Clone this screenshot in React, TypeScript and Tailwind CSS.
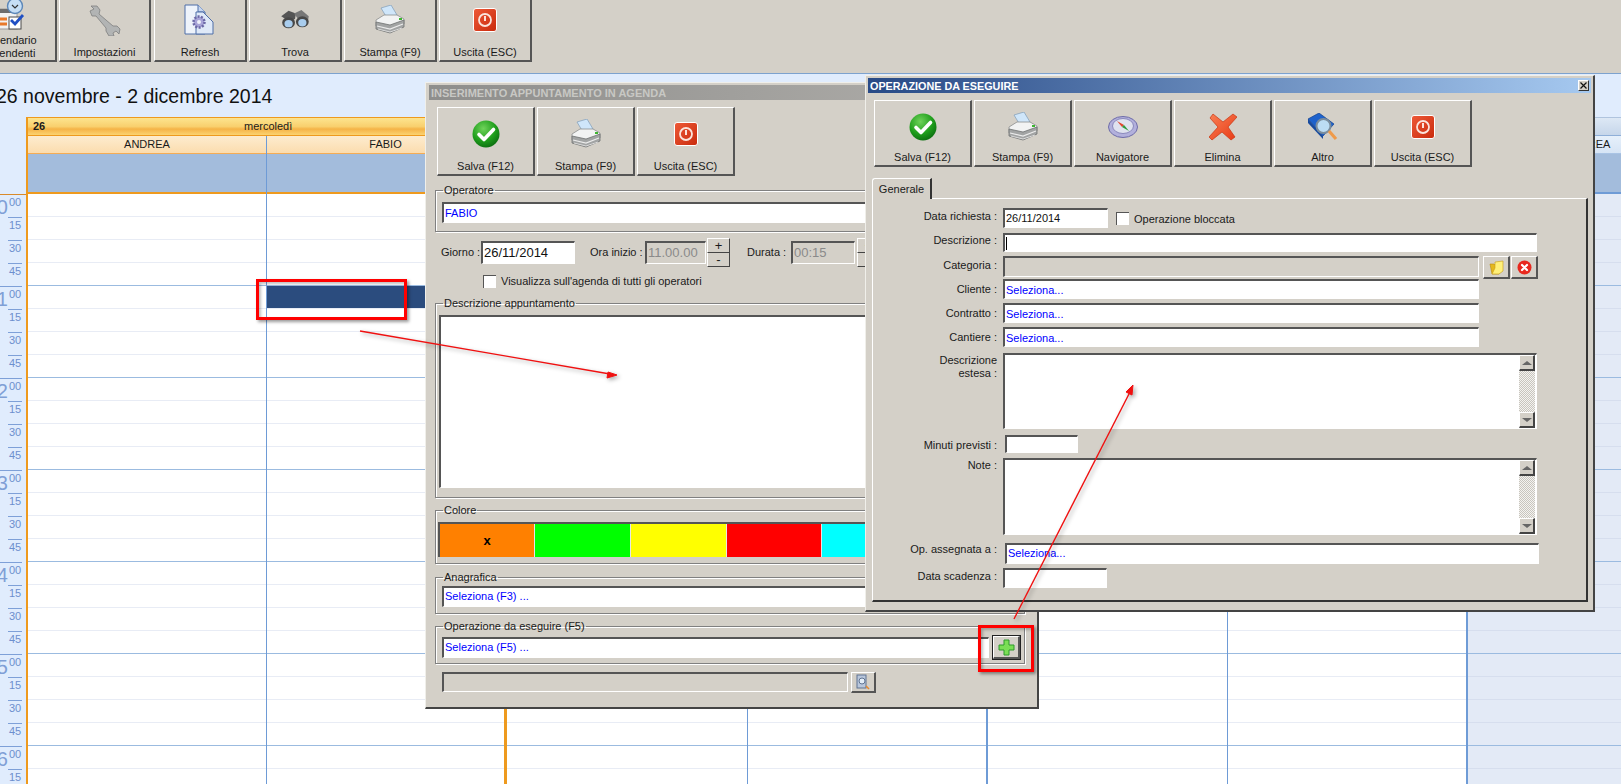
import type { ReactNode } from 'react';

const CheckIcon = () => (
  <svg width="28" height="28" viewBox="0 0 28 28">
    <defs>
      <radialGradient id="okGrad" cx="40%" cy="30%" r="75%">
        <stop offset="0" stopColor="#6fd35a" />
        <stop offset="0.6" stopColor="#1f9e1c" />
        <stop offset="1" stopColor="#0b6b10" />
      </radialGradient>
    </defs>
    <circle cx="14" cy="14" r="13.5" fill="url(#okGrad)" />
    <path d="M7 14.5l5 5 9.5-10" fill="none" stroke="#fff" strokeWidth="3.6" strokeLinecap="round" strokeLinejoin="round" />
  </svg>
);

const PrinterIcon = () => (
  <svg width="30" height="30" viewBox="0 0 30 30">
    <path d="M6 3l10-3 6 10-10 3z" fill="#cfe6fa" stroke="#7f9cb8" strokeWidth="0.7" />
    <path d="M1 15l8-5h13l7 4v5l-14 5-14-3z" fill="#f2f3f3" stroke="#8b8d8d" strokeWidth="0.8" />
    <path d="M1 17l14 3 14-5v7l-14 6-14-4z" fill="#a2a4a4" stroke="#6f7171" strokeWidth="0.8" />
    <path d="M2 21l13 3 13-5" fill="none" stroke="#ececec" strokeWidth="1.2" />
    <path d="M3 24l12 3 12-4" fill="none" stroke="#dadada" strokeWidth="1" />
    <rect x="24" y="13" width="3" height="2" fill="#3db52f" />
  </svg>
);

const PowerIcon = () => (
  <svg width="24" height="24" viewBox="0 0 24 24">
    <defs>
      <linearGradient id="pwGrad" x1="0" y1="0" x2="1" y2="1">
        <stop offset="0" stopColor="#ee5a38" />
        <stop offset="1" stopColor="#c92a0c" />
      </linearGradient>
    </defs>
    <rect x="0.5" y="0.5" width="23" height="23" rx="2.5" fill="url(#pwGrad)" stroke="#fff" />
    <circle cx="12" cy="12" r="6" fill="none" stroke="#fbe4dc" strokeWidth="1.8" />
    <rect x="11" y="8" width="2" height="5" fill="#fbe4dc" />
  </svg>
);

const WrenchIcon = () => (
  <svg width="32" height="32" viewBox="0 0 32 32">
    <path d="M1 7l4-2-3-3 6 0 3 4-1 4 14 12 4 0 3 3-1 5-3-3-3 2 1 3-5 0-3-5 0-3L7 12l-4 0z" fill="#b2b4b4" stroke="#7d7f7f" strokeWidth="0.8" />
  </svg>
);

const RefreshIcon = () => (
  <svg width="32" height="32" viewBox="0 0 32 32">
    <path d="M1 1h13l7 7v22H1z" fill="#eef3fb" stroke="#4f6ea8" />
    <path d="M14 1v7h7" fill="#c6d6f0" stroke="#4f6ea8" />
    <path d="M12 8h7l10 10v12H12z" fill="#dfe9f8" stroke="#4f6ea8" />
    <circle cx="15" cy="18" r="5.5" fill="#a8a4d8" stroke="#6b68a6" strokeWidth="2.5" strokeDasharray="2 1.4" />
    <circle cx="15" cy="18" r="2" fill="#eef0fa" />
  </svg>
);

const BinocularsIcon = () => (
  <svg width="32" height="22" viewBox="0 0 32 24">
    <path d="M1 8l8-6 8 3-1 6-6 3z" fill="#555" />
    <path d="M15 5l8-4 8 7-1 6-7 2z" fill="#777" />
    <ellipse cx="9" cy="15" rx="7" ry="6" fill="#484848" />
    <ellipse cx="24" cy="14" rx="7" ry="6" fill="#484848" />
    <ellipse cx="9" cy="16" rx="4.5" ry="4" fill="#a9cdee" />
    <ellipse cx="24" cy="15" rx="4.5" ry="4" fill="#a9cdee" />
  </svg>
);

const CalendarIcon = () => (
  <svg className="-translate-y-[5px]" width="30" height="32" viewBox="0 0 30 32">
    <rect x="0" y="10" width="22" height="20" fill="#f2f2f2" stroke="#9b9b9b" />
    <rect x="0" y="10" width="22" height="4" fill="#6c6c6c" />
    <path d="M3 20h9M3 25h9" stroke="#e8792a" strokeWidth="3" />
    <rect x="14" y="18" width="12" height="12" fill="#fff" stroke="#4a4a4a" />
    <path d="M16 21l4 4 8-9" fill="none" stroke="#1f4fc4" strokeWidth="2.8" />
    <circle cx="20" cy="7" r="7.5" fill="#c6def5" stroke="#5b86b8" strokeWidth="1.4" />
    <path d="M17 6l3 3 3-3" fill="none" stroke="#333" strokeWidth="1.2" />
  </svg>
);

const CompassIcon = () => (
  <svg width="30" height="26" viewBox="0 0 30 26">
    <ellipse cx="15" cy="13" rx="14.5" ry="10.5" fill="#b2b0dc" stroke="#6f6da8" />
    <ellipse cx="15" cy="12" rx="10.5" ry="7.5" fill="#dfe2ef" stroke="#8a88bc" />
    <path d="M9 7l7 4-2 2z" fill="#e0462c" />
    <path d="M21 17l-7-4 2-2z" fill="#2f9a3e" />
  </svg>
);

const DeleteIcon = () => (
  <svg width="28" height="28" viewBox="0 0 28 28">
    <defs>
      <linearGradient id="xGrad" x1="0" y1="0" x2="1" y2="1">
        <stop offset="0" stopColor="#f98055" />
        <stop offset="1" stopColor="#e83a15" />
      </linearGradient>
    </defs>
    <path d="M4 1l10 8 10-8 4 3-9 10 7 10-4 3-9-8-10 8-3-3 9-10-8-9z" fill="url(#xGrad)" stroke="#c93410" strokeWidth="0.7" strokeLinejoin="round" />
  </svg>
);

const BookIcon = () => (
  <svg width="31" height="29" viewBox="0 0 31 29">
    <path d="M1 6l11-6 15 11-11 12z" fill="#1e62cc" stroke="#12408c" strokeWidth="0.7" />
    <path d="M1 6l15 17v3L1 10z" fill="#174a9e" />
    <circle cx="16.5" cy="13" r="7" fill="#bcdcf3" stroke="#7b8d9c" strokeWidth="2" />
    <path d="M22 18l7 8" stroke="#ef9a4a" strokeWidth="3.2" />
  </svg>
);

const FolderIcon = () => (
  <svg width="15" height="15" viewBox="0 0 15 15">
    <path d="M1 4h4l1 1h4v9H3z" fill="#e4b81e" stroke="#b98c10" strokeWidth="0.6" />
    <path d="M6 2l8-1v10l-4 3H3l3-6z" fill="#fff07a" stroke="#c79a12" strokeWidth="0.6" />
  </svg>
);

const ClearIcon = () => (
  <svg width="15" height="15" viewBox="0 0 15 15">
    <circle cx="7.5" cy="7.5" r="7" fill="#e8281e" />
    <path d="M5 5l5 5M10 5l-5 5" stroke="#fff" strokeWidth="2.2" strokeLinecap="round" />
  </svg>
);

const PlusIcon = () => (
  <svg width="17" height="17" viewBox="0 0 17 17">
    <path d="M6 1h5v5h5v5h-5v5H6v-5H1V6h5z" fill="#7ade55" stroke="#2c9a2a" />
  </svg>
);

const DocSearchIcon = () => (
  <svg width="14" height="16" viewBox="0 0 14 16">
    <rect x="1" y="1" width="9" height="13" fill="#b9c7dc" stroke="#5f7391" />
    <circle cx="6" cy="7" r="3" fill="#e4eef8" stroke="#5f7391" />
    <path d="M10 12l3 3" stroke="#e88a2e" strokeWidth="1.6" />
  </svg>
);

const ToolButton = ({ icon, label, className }: { icon: ReactNode; label: ReactNode; className: string }) => (
  <div className={`flex flex-col items-center justify-between shrink-0 pt-[12px] pb-[1px] border-t border-l border-t-white border-l-white border-r-2 border-b-2 border-r-[#555] border-b-[#555] bg-[#d4d0c8] ${className}`}>
    <div className="h-[28px] flex items-center justify-center">{icon}</div>
    <div className="text-center leading-[13px] whitespace-nowrap">{label}</div>
  </div>
);

const Field = ({ className, children }: { className: string; children?: ReactNode }) => (
  <div className={`flex items-center pl-[1px] border-t-2 border-l-2 border-t-[#555] border-l-[#555] border-b border-r border-b-white border-r-white text-[#0000ff] whitespace-nowrap overflow-hidden shrink-0 ${className}`}>
    {children}
  </div>
);

const Group = ({ title, className, bodyClass, children }: { title: string; className: string; bodyClass: string; children: ReactNode }) => (
  <fieldset className={`border border-[#808080] shadow-[1px_1px_0_#fff,inset_1px_1px_0_#fff] w-[590px] ${className}`}>
    <legend className="ml-[7px] px-[1px] leading-[16px] whitespace-nowrap">{title}</legend>
    <div className={bodyClass}>{children}</div>
  </fieldset>
);

const SmallButton = ({ className, children }: { className: string; children: ReactNode }) => (
  <div className={`flex items-center justify-center shrink-0 border-t border-l border-t-white border-l-white border-r-2 border-b-2 border-r-[#555] border-b-[#555] ${className}`}>
    {children}
  </div>
);

const Spinner = () => (
  <div className="w-[23px] h-[29px] flex flex-col shrink-0 text-[13px] leading-[12px]">
    <div className="h-[15px] flex items-center justify-center border-t border-l border-t-white border-l-white border-r border-b border-r-[#444] border-b-[#444]">+</div>
    <div className="h-[14px] flex items-center justify-center border-l border-l-white border-r border-b border-r-[#444] border-b-[#444]">-</div>
  </div>
);

const Scrollbar = () => (
  <div className="w-[16px] flex flex-col shrink-0 bg-[repeating-conic-gradient(#c8c5be_0_25%,#f4f3f0_0_50%)] bg-[length:2px_2px]">
    <div className="h-[16px] flex items-center justify-center bg-[#d4d0c8] border-t border-l border-t-white border-l-white border-r-2 border-b-2 border-r-[#444] border-b-[#444]">
      <div className="w-0 h-0 border-x-[5px] border-x-transparent border-b-[4px] border-b-[#666]" />
    </div>
    <div className="flex-1" />
    <div className="h-[16px] flex items-center justify-center bg-[#d4d0c8] border-t border-l border-t-white border-l-white border-r-2 border-b-2 border-r-[#444] border-b-[#444]">
      <div className="w-0 h-0 border-x-[5px] border-x-transparent border-t-[4px] border-t-[#666]" />
    </div>
  </div>
);

const Row = ({ label, className, labelClass, children }: { label: ReactNode; className: string; labelClass: string; children: ReactNode }) => (
  <div className={`flex items-start ${className}`}>
    <div className={`w-[124px] mr-[6px] text-right leading-[13px] shrink-0 whitespace-nowrap ${labelClass}`}>{label}</div>
    {children}
  </div>
);

const swatches = [
  { color: 'bg-[#ff8000]', width: 'w-[95px]', mark: 'x' },
  { color: 'bg-[#00ff00]', width: 'w-[96px]', mark: '' },
  { color: 'bg-[#ffff00]', width: 'w-[96px]', mark: '' },
  { color: 'bg-[#ff0000]', width: 'w-[95px]', mark: '' },
  { color: 'bg-[#00ffff]', width: 'w-[95px]', mark: '' },
];

const columns = [
  { day: '26', name: 'mercoledì', today: true, ops: [{ n: 'ANDREA', w: 'w-[239px]' }, { n: 'FABIO', w: 'w-[240px]', event: true }], width: 'w-[479px]', edge: 'border-r-[3px] border-r-[#ee9a1e]' },
  { day: '27', name: 'giovedì', today: false, ops: [{ n: 'ANDREA', w: 'w-[241px]' }, { n: 'FABIO', w: 'w-[240px]' }], width: 'w-[481px]', edge: 'border-r-2 border-r-[#6e9bd6]' },
  { day: '28', name: 'venerdì', today: false, ops: [{ n: 'ANDREA', w: 'w-[240px]' }, { n: 'FABIO', w: 'w-[240px]' }], width: 'w-[480px]', edge: 'border-r-2 border-r-[#6e9bd6]' },
  { day: '29', name: 'sabato', today: false, shaded: true, ops: [{ n: 'ANDREA', w: 'w-[240px]' }, { n: 'FABIO', w: 'w-[240px]' }], width: 'w-[480px]', edge: '' },
];

const quarters = Array.from({ length: 28 }, (_, i) => i);
const hours = ['10', '11', '12', '13', '14', '15', '16'];

const Calendar = () => (
  <div className="flex">
    <div className="w-[26px] shrink-0">
      <div className="h-[78px] border-b border-b-[#d98a2a]" />
      {hours.map((h) => (
        <div key={h} className="flex h-[92px] pr-[4px]">
          <div className="w-[8px] shrink-0 flex justify-end overflow-visible border-b border-b-[#7ea0d8]">
            <span className="text-[20px] leading-[24px] text-[#7f9fd6]">{h}</span>
          </div>
          <div className="w-[14px] shrink-0 text-[11px] leading-[13px] text-[#6d8fce]">
            {['00', '15', '30', '45'].map((m) => (
              <div key={m} className="h-[23px] pl-[1px] pt-[1px] border-b border-b-[#7ea0d8]">{m}</div>
            ))}
          </div>
        </div>
      ))}
    </div>
    <div className="flex shrink-0 border-l-2 border-l-[#ee9a1e]">
      {columns.map((d) => (
        <div key={d.day} className={`shrink-0 ${d.width}`}>
          <div className={`h-[19px] flex items-center pl-[5px] border-t border-b ${d.today ? 'bg-[linear-gradient(#fde48f,#f9d06e_50%,#f5b347_65%,#fbd371)] border-t-[#ee9a1e] border-b-[#ee9a1e]' : 'bg-[linear-gradient(#dde8f5,#c6d6ea)] border-t-[#b0c4de] border-b-[#8fafd8]'}`}>
            <span className="font-bold">{d.day}</span>
            <span className="flex-1 text-center pr-[16px]">{d.name}</span>
          </div>
          <div className="flex">
            {d.ops.map((op, oi) => (
              <div key={op.n} className={`shrink-0 ${op.w} ${oi === 1 ? d.edge : 'border-r border-r-[#6e9bd6]'}`}>
                <div className={`h-[18px] flex items-center justify-center border-b ${d.today ? 'bg-[linear-gradient(#fdeccf,#fbdcae)] border-b-[#f4ac55]' : 'bg-[linear-gradient(#e6f0fb,#d6e4f5)] border-b-[#a9c3e4]'}`}>{op.n}</div>
                <div className={`h-[40px] bg-[#a3bcdc] border-b-2 ${d.today ? 'border-b-[#ee9a1e]' : 'border-b-[#6e9bd6]'}`} />
                {quarters.map((q) => (
                  <div
                    key={q}
                    className={`h-[23px] border-b ${q % 4 === 3 ? 'border-b-[#9bbbe0]' : d.shaded ? 'border-b-[#d6deee]' : 'border-b-[#e8ecf5]'} ${'event' in op && op.event && q === 4 ? 'bg-[#2b4c7e]' : d.shaded ? 'bg-[#e3eaf6]' : 'bg-white'}`}
                  />
                ))}
              </div>
            ))}
          </div>
        </div>
      ))}
    </div>
  </div>
);

const AppointmentDialog = () => (
  <div className="absolute left-[425px] top-[82px] w-[614px] h-[627px] bg-[#d4d0c8] border-t border-l border-t-[#f0efea] border-l-[#f0efea] border-r-2 border-b-2 border-r-[#444] border-b-[#444]">
    <div className="mx-[3px] mt-[2px] h-[15px] flex items-center pl-[2px] pt-[1px] font-bold text-[11px] text-[#c8c8c4] bg-[linear-gradient(90deg,#8e8e8c,#b2b0ac)]">
      INSERIMENTO APPUNTAMENTO IN AGENDA
    </div>
    <div className="pl-[9px]">
      <div className="flex gap-[2px] mt-[7px] ml-[2px]">
        <ToolButton icon={<CheckIcon />} label="Salva (F12)" className="w-[98px] h-[69px]" />
        <ToolButton icon={<PrinterIcon />} label="Stampa (F9)" className="w-[98px] h-[69px]" />
        <ToolButton icon={<PowerIcon />} label="Uscita (ESC)" className="w-[98px] h-[69px]" />
      </div>
      <Group title="Operatore" className="mt-[6px] h-[50px]" bodyClass="pl-[6px] pt-[4px]">
        <Field className="w-[574px] h-[21px] bg-white">FABIO</Field>
      </Group>
      <div className="flex items-center h-[29px] mt-[6px] ml-[6px]">
        <span className="w-[37px] shrink-0 whitespace-nowrap">Giorno :</span>
        <Field className="ml-[3px] w-[94px] h-[23px] bg-white !text-[#111] text-[13px]">26/11/2014</Field>
        <span className="ml-[15px] w-[52px] shrink-0 whitespace-nowrap">Ora inizio :</span>
        <Field className="ml-[3px] w-[61px] h-[23px] !text-[#8a8a8a] text-[13px]">11.00.00</Field>
        <div className="ml-[1px]"><Spinner /></div>
        <span className="ml-[17px] w-[40px] shrink-0 whitespace-nowrap">Durata :</span>
        <Field className="ml-[4px] w-[64px] h-[23px] !text-[#8a8a8a] text-[13px]">00:15</Field>
        <div className="ml-[2px]"><Spinner /></div>
      </div>
      <div className="flex items-center h-[13px] mt-[8px] ml-[48px]">
        <div className="w-[13px] h-[13px] shrink-0 bg-white border-t border-l border-t-[#555] border-l-[#555]" />
        <span className="ml-[5px] whitespace-nowrap">Visualizza sull'agenda di tutti gli operatori</span>
      </div>
      <Group title="Descrizione appuntamento" className="mt-[7px] h-[203px]" bodyClass="pl-[3px] pt-[4px]">
        <Field className="w-[580px] h-[173px] bg-white"> </Field>
      </Group>
      <Group title="Colore" className="mt-[4px] h-[62px]" bodyClass="pl-[2px] pt-[4px]">
        <div className="flex h-[35px] w-[582px] border-t-2 border-l-2 border-t-[#555] border-l-[#555] overflow-hidden">
          {swatches.map((s) => (
            <div key={s.color} className={`shrink-0 flex items-center justify-center border-r border-r-[#e6e6e6] font-bold text-[13px] text-black ${s.color} ${s.width}`}>
              {s.mark}
            </div>
          ))}
        </div>
      </Group>
      <Group title="Anagrafica" className="mt-[5px] h-[45px]" bodyClass="pl-[6px] pt-[1px]">
        <Field className="w-[574px] h-[21px] bg-white pb-[2px]">Seleziona (F3) ...</Field>
      </Group>
      <Group title="Operazione da eseguire (F5)" className="mt-[4px] h-[46px]" bodyClass="pl-[6px] pt-[2px]">
        <div className="flex items-start gap-[4px]">
          <Field className="w-[547px] h-[21px] bg-white mt-[1px] pb-[2px]">Seleziona (F5) ...</Field>
          <SmallButton className="w-[27px] h-[23px] outline outline-1 outline-[#222]"><PlusIcon /></SmallButton>
        </div>
      </Group>
      <div className="flex items-start gap-[3px] mt-[8px] ml-[7px]">
        <Field className="w-[406px] h-[20px]"> </Field>
        <SmallButton className="w-[25px] h-[21px]"><DocSearchIcon /></SmallButton>
      </div>
    </div>
  </div>
);

const OperationDialog = () => (
  <div className="absolute left-[865px] top-[75px] w-[730px] h-[537px] bg-[#d4d0c8] border-t border-l border-t-[#f0efea] border-l-[#f0efea] border-r-2 border-b-2 border-r-[#444] border-b-[#444]">
    <div className="mx-[2px] mt-[2px] h-[15px] flex items-center justify-between pl-[2px] pr-[2px] font-bold text-[10.8px] text-white bg-[linear-gradient(90deg,#284a86,#a6c9f0)]">
      <span className="pt-[1px]">OPERAZIONE DA ESEGUIRE</span>
      <div className="w-[11px] h-[11px] flex items-center justify-center bg-[#d4d0c8] border-t border-l border-t-white border-l-white border-r border-b border-r-[#333] border-b-[#333]">
        <svg width="7" height="7" viewBox="0 0 7 7"><path d="M0.5 0.5l6 6M6.5 0.5l-6 6" stroke="#111" strokeWidth="1.2" /></svg>
      </div>
    </div>
    <div className="flex gap-[2px] mt-[7px] ml-[8px]">
      <ToolButton icon={<CheckIcon />} label="Salva (F12)" className="w-[98px] h-[67px]" />
      <ToolButton icon={<PrinterIcon />} label="Stampa (F9)" className="w-[98px] h-[67px]" />
      <ToolButton icon={<CompassIcon />} label="Navigatore" className="w-[98px] h-[67px]" />
      <ToolButton icon={<DeleteIcon />} label="Elimina" className="w-[98px] h-[67px]" />
      <ToolButton icon={<BookIcon />} label="Altro" className="w-[98px] h-[67px]" />
      <ToolButton icon={<PowerIcon />} label="Uscita (ESC)" className="w-[98px] h-[67px]" />
    </div>
    <div className="relative z-10 ml-[6px] mt-[11px] -mb-[1px] w-[60px] h-[21px] flex items-center justify-center rounded-tl-[3px] bg-[#d4d0c8] border-t border-l border-t-white border-l-white border-r-2 border-r-[#333]">
      Generale
    </div>
    <div className="ml-[6px] w-[716px] h-[404px] pt-[9px] border-t border-l border-t-white border-l-white border-r-2 border-b-2 border-r-[#333] border-b-[#333]">
      <Row label="Data richiesta :" className="h-[20px]" labelClass="pt-[2px]">
        <Field className="w-[105px] h-[20px] bg-white !text-[#111]">26/11/2014</Field>
        <div className="w-[13px] h-[13px] ml-[8px] mt-[4px] shrink-0 bg-white border-t border-l border-t-[#555] border-l-[#555]" />
        <span className="ml-[5px] mt-[3px] whitespace-nowrap">Operazione bloccata</span>
      </Row>
      <Row label="Descrizione :" className="h-[19px] mt-[5px]" labelClass="pt-[1px]">
        <Field className="w-[534px] h-[19px] bg-white">
          <div className="w-[1px] h-[13px] bg-black" />
        </Field>
      </Row>
      <Row label="Categoria :" className="h-[23px] mt-[4px]" labelClass="pt-[3px]">
        <Field className="w-[476px] h-[21px]"> </Field>
        <SmallButton className="w-[27px] h-[23px] ml-[4px]"><FolderIcon /></SmallButton>
        <SmallButton className="w-[27px] h-[23px] ml-[1px]"><ClearIcon /></SmallButton>
      </Row>
      <Row label="Cliente :" className="h-[20px]" labelClass="pt-[4px]">
        <Field className="w-[476px] h-[20px] bg-white pt-[1px]">Seleziona...</Field>
      </Row>
      <Row label="Contratto :" className="h-[20px] mt-[4px]" labelClass="pt-[4px]">
        <Field className="w-[476px] h-[20px] bg-white pt-[1px]">Seleziona...</Field>
      </Row>
      <Row label="Cantiere :" className="h-[20px] mt-[4px]" labelClass="pt-[4px]">
        <Field className="w-[476px] h-[20px] bg-white pt-[1px]">Seleziona...</Field>
      </Row>
      <Row label={<>Descrizione<br />estesa :</>} className="h-[76px] mt-[6px]" labelClass="pt-[1px]">
        <div className="flex w-[534px] h-[76px] pr-[1px] bg-white border-t-2 border-l-2 border-t-[#555] border-l-[#555] border-b border-r border-b-white border-r-white">
          <div className="flex-1" />
          <Scrollbar />
        </div>
      </Row>
      <Row label="Minuti previsti :" className="h-[18px] mt-[6px]" labelClass="pt-[4px]">
        <Field className="ml-[2px] w-[73px] h-[18px] bg-white"> </Field>
      </Row>
      <Row label="Note :" className="h-[77px] mt-[5px]" labelClass="pt-[1px]">
        <div className="flex w-[534px] h-[77px] pr-[1px] bg-white border-t-2 border-l-2 border-t-[#555] border-l-[#555] border-b border-r border-b-white border-r-white">
          <div className="flex-1" />
          <Scrollbar />
        </div>
      </Row>
      <Row label="Op. assegnata a :" className="h-[21px] mt-[8px]" labelClass="pt-0">
        <Field className="ml-[2px] w-[534px] h-[21px] bg-white pb-[1px]">Seleziona...</Field>
      </Row>
      <Row label="Data scadenza :" className="h-[20px] mt-[4px]" labelClass="pt-[2px]">
        <Field className="w-[104px] h-[20px] bg-white"> </Field>
      </Row>
    </div>
  </div>
);

const RedBox = ({ className }: { className: string }) => (
  <div className={`absolute border-[3px] border-[#ff0000] shadow-[2px_2px_3px_rgba(0,0,0,0.4),inset_2px_2px_3px_rgba(0,0,0,0.25)] ${className}`} />
);

export default function App() {
  return (
    <div className="relative w-[1621px] h-[784px] overflow-hidden bg-[#e0ecfd] font-['Liberation_Sans',sans-serif] text-[11px] text-[#1a1a1a]">
      {/* Toolbar */}
      <div className="h-[74px] bg-[#d4d0c8] border-b border-b-[#7da2ce] overflow-hidden">
        <div className="flex gap-[2px] -ml-[36px] -mt-[7px]">
          <ToolButton icon={<CalendarIcon />} label={<>Calendario<br />dipendenti</>} className="w-[93px] h-[69px]" />
          <ToolButton icon={<WrenchIcon />} label="Impostazioni" className="w-[92px] h-[69px] mr-[1px]" />
          <ToolButton icon={<RefreshIcon />} label="Refresh" className="w-[93px] h-[69px]" />
          <ToolButton icon={<BinocularsIcon />} label="Trova" className="w-[93px] h-[69px]" />
          <ToolButton icon={<PrinterIcon />} label="Stampa (F9)" className="w-[93px] h-[69px]" />
          <ToolButton icon={<PowerIcon />} label="Uscita (ESC)" className="w-[93px] h-[69px]" />
        </div>
      </div>

      {/* Week title */}
      <div className="h-[43px] -ml-[4px] pt-[2px] flex items-center text-[19.5px] text-[#111] whitespace-nowrap">
        26 novembre - 2 dicembre 2014
      </div>

      <Calendar />

      <AppointmentDialog />
      <OperationDialog />

      {/* Callouts drawn on top of the screenshot */}
      <RedBox className="left-[256px] top-[279px] w-[151px] h-[41px]" />
      <RedBox className="left-[978px] top-[625px] w-[56px] h-[47px]" />
      <svg className="absolute left-0 top-0 pointer-events-none drop-shadow-[2px_2px_2px_rgba(0,0,0,0.35)]" width="1621" height="784" viewBox="0 0 1621 784">
        <path d="M360 331L610 374" stroke="#f01010" strokeWidth="1.4" />
        <path d="M617 375l-10 3 1-6z" fill="#f01010" stroke="#f01010" />
        <path d="M1014 619L1130 392" stroke="#f01010" strokeWidth="1.4" />
        <path d="M1133 385l-1 10-6-3z" fill="#f01010" stroke="#f01010" />
      </svg>
    </div>
  );
}
